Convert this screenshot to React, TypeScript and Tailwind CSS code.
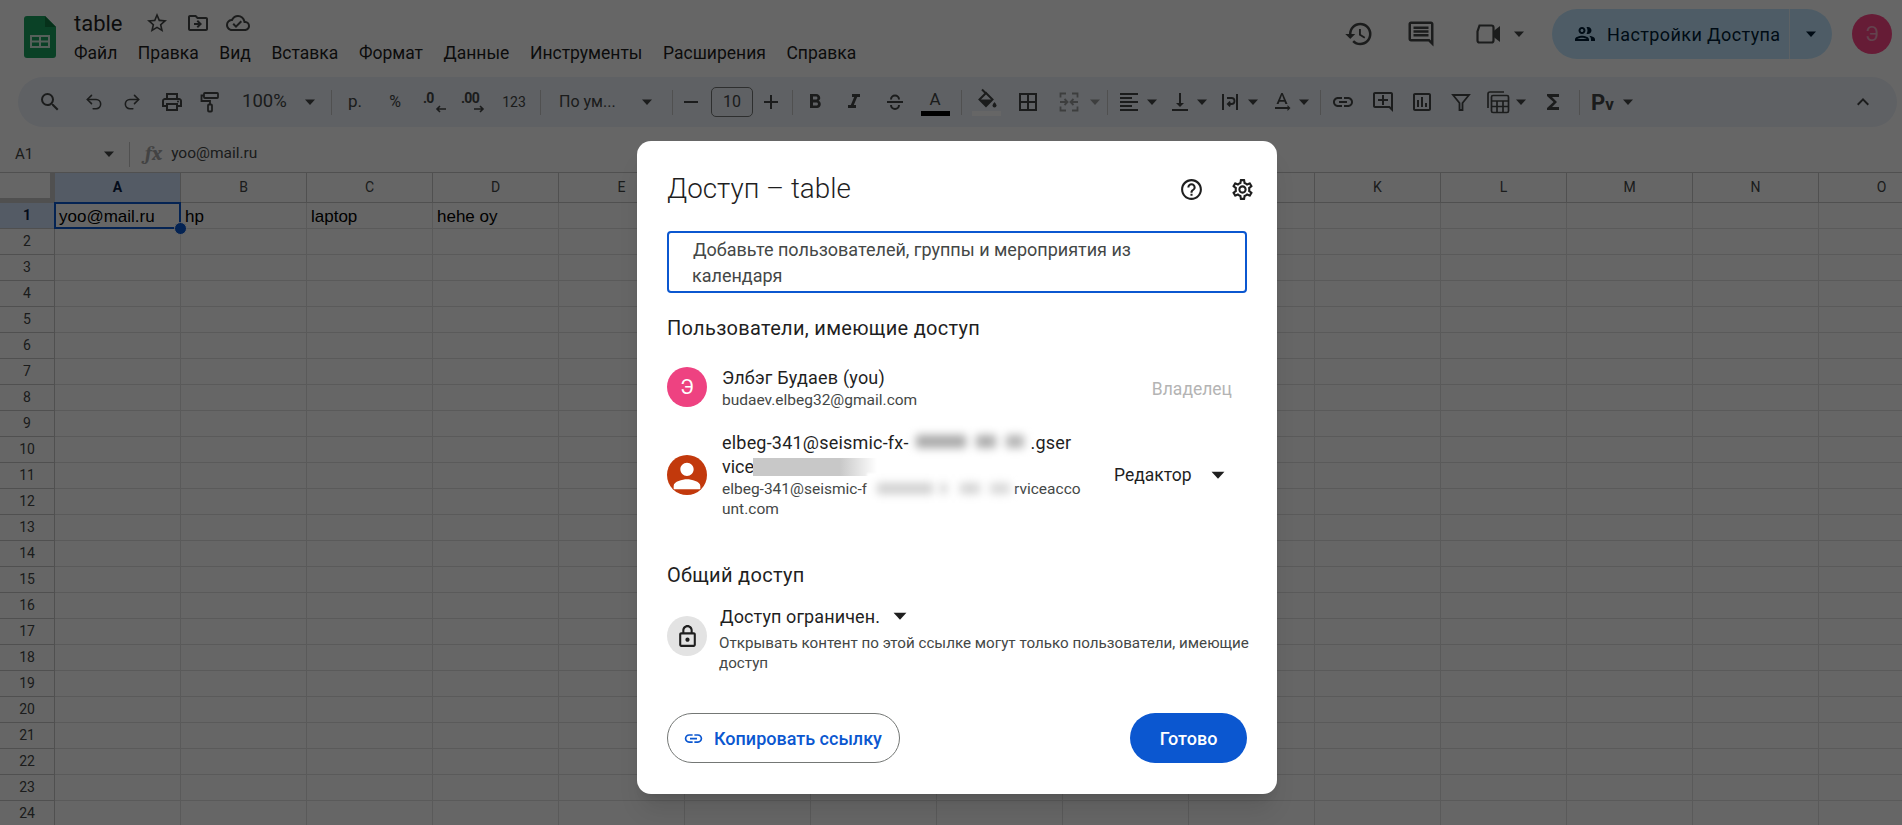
import React from "react";
import { Redo2, Undo2 } from "lucide-react";
import {
  MdExpandLess,
  MdFormatBold,
  MdFormatItalic,
  MdFunctions,
  MdHelpOutline,
  MdHistory,
  MdLink,
  MdOutlineAddComment,
  MdOutlineBorderAll,
  MdOutlineCloudDone,
  MdOutlineComment,
  MdOutlineDriveFileMove,
  MdOutlineInsertChart,
  MdOutlineLock,
  MdOutlinePeople,
  MdOutlinePrint,
  MdOutlineSettings,
  MdPerson,
  MdSearch,
  MdStarBorder,
  MdTextRotationNone,
  MdVerticalAlignBottom,
} from "react-icons/md";

const columns = ["A", "B", "C", "D", "E", "F", "G", "H", "I", "J", "K", "L", "M", "N", "O"];
const rows = Array.from({ length: 24 }, (_, i) => i + 1);
const menu = ["Файл", "Правка", "Вид", "Вставка", "Формат", "Данные", "Инструменты", "Расширения", "Справка"];
const firstRow = ["yoo@mail.ru", "hp", "laptop", "hehe oy"];

type CaretProps = { size?: string; tone?: string; className?: string };

const Caret = ({ size = "h-[14px] w-[14px]", tone = "fill-[#444746]", className = "" }: CaretProps) => (
  <svg viewBox="0 0 14 14" className={`shrink-0 ${size} ${tone} ${className}`}>
    <path d="M2 4.5h10l-5 5.5z" />
  </svg>
);

const Divider = ({ className = "" }: { className?: string }) => (
  <div className={`h-[25px] w-px shrink-0 bg-[#c7c7c7] ${className}`} />
);

// Tool icon with a fixed 24px box, the margin sets its place in the strip
const Tool = ({ className = "", children }: { className?: string; children: React.ReactNode }) => (
  <div className={`flex h-6 w-6 shrink-0 items-center justify-center text-[24px] text-[#444746] ${className}`}>
    {children}
  </div>
);

const Stroke = ({ children, color = "#444746" }: { children: React.ReactNode; color?: string }) => (
  <svg viewBox="0 0 24 24" className="h-6 w-6" fill="none" stroke={color} strokeWidth="1.8">
    {children}
  </svg>
);

const SheetsLogo = () => (
  <svg viewBox="0 0 32 42" className="h-[42px] w-8 shrink-0">
    <path d="M3 0h18l11 11v28a3 3 0 0 1-3 3H3a3 3 0 0 1-3-3V3a3 3 0 0 1 3-3z" fill="#1aa260" />
    <path d="M21 0l11 11H21z" fill="#0f7a42" />
    <path
      d="M6 19h20v13H6z M8 21v3.5h7V21z M17 21v3.5h7V21z M8 26.5V30h7v-3.5z M17 26.5V30h7v-3.5z"
      fill="#d8f0e2"
      fillRule="evenodd"
    />
  </svg>
);

const CameraIcon = () => (
  <svg viewBox="0 0 30 30" className="h-[30px] w-[30px]">
    <path
      d="M6.5 6.5h12a2 2 0 0 1 2 2v13a2 2 0 0 1-2 2h-12a2 2 0 0 1-2-2v-9z"
      fill="none"
      stroke="#444746"
      strokeWidth="2.2"
    />
    <path d="M20 12.5l7-5.5v16l-7-5.5z" fill="#444746" />
  </svg>
);

const PaintIcon = () => (
  <Stroke>
    <rect x="6" y="3" width="14" height="5" rx="0.8" />
    <path d="M6 5.5H3.5V11H12v3.5" />
    <rect x="10" y="14.5" width="4" height="7" rx="1" />
  </Stroke>
);

const StrikeIcon = () => (
  <Stroke>
    <path d="M8 9.5a4 4 0 0 1 8 0 M4 12h16 M8 15a4 4 0 0 0 8 0" strokeWidth="2" />
  </Stroke>
);

const FillIcon = () => (
  <svg viewBox="0 0 24 24" className="h-6 w-6">
    <path d="M12 6l6.5 6.5-6.5 6.5-6.5-6.5z" fill="none" stroke="#444746" strokeWidth="2" />
    <path d="M5.5 12.5h13L12 19z" fill="#444746" />
    <path d="M8 2.5l4 4" stroke="#444746" strokeWidth="2" />
    <path d="M20.5 15s-2 2.3-2 3.6a2 2 0 0 0 4 0c0-1.3-2-3.6-2-3.6z" fill="#444746" />
  </svg>
);

const MergeIcon = () => (
  <Stroke color="#9a9c9c">
    <path d="M9 3.5H3.5v4 M3.5 16.5v4H9 M15 3.5h5.5v4 M20.5 16.5v4H15" />
    <path d="M3 12h7 M7.5 9l3 3-3 3 M21 12h-7 M16.5 9l-3 3 3 3" />
  </Stroke>
);

const AlignIcon = () => (
  <Stroke>
    <path d="M3 4h18 M3 8h12 M3 12h18 M3 16h12 M3 20h18" />
  </Stroke>
);

const WrapIcon = () => (
  <Stroke>
    <path d="M5 4v16 M19 4v16" strokeWidth="2" />
    <path d="M9 8h4.5a2.8 2.8 0 0 1 0 6H10 M12.2 11.6L9.8 14l2.4 2.4" />
  </Stroke>
);

const FilterIcon = () => (
  <Stroke>
    <path d="M4 5h16l-6.5 8v7h-3v-7z" />
  </Stroke>
);

const CalcIcon = () => (
  <svg viewBox="0 0 24 24" className="h-6 w-6" fill="none" stroke="#444746" strokeWidth="1.7">
    <path d="M2 18V4a2 2 0 0 1 2-2h14" />
    <rect x="5.5" y="5.5" width="17" height="17" rx="1.5" />
    <path d="M5.5 11h17 M5.5 16.5h17 M11 11v11.5 M17 11v11.5" />
  </svg>
);

const DecimalIcon = ({ label, flip }: { label: string; flip?: boolean }) => (
  <div className="flex w-[24px] flex-col text-[14px] leading-[13px] font-bold text-[#444746]">
    <span className="self-start tracking-tighter">{label}</span>
    <svg
      viewBox="0 0 12 8"
      className={`h-2 w-3 self-end ${flip ? "rotate-180" : ""}`}
      fill="none"
      stroke="#444746"
      strokeWidth="1.6"
    >
      <path d="M11 4H2 M5 1L2 4l3 3" />
    </svg>
  </div>
);

const TopBar = () => (
  <div className="flex h-[77px] items-start">
    <div className="mt-4 ml-6">
      <SheetsLogo />
    </div>
    <div className="mt-2 ml-[18px] flex flex-col">
      <div className="flex h-[30px] items-center">
        <span className="text-[22px] text-[#1f1f1f]">table</span>
        <MdStarBorder className="ml-[22px] text-[24px] text-[#444746]" />
        <MdOutlineDriveFileMove className="ml-[17px] text-[24px] text-[#444746]" />
        <MdOutlineCloudDone className="ml-[16px] text-[24px] text-[#444746]" />
      </div>
      <div className="flex h-[30px] items-center gap-[20.6px] text-[17.5px] text-[#1f1f1f]">
        {menu.map((item) => (
          <span key={item}>{item}</span>
        ))}
      </div>
    </div>
    <div className="mt-[9px] mr-[10px] ml-auto flex items-center">
      <MdHistory className="text-[30px] text-[#444746]" />
      <MdOutlineComment className="ml-[32px] text-[30px] text-[#444746]" />
      <div className="ml-[37px]">
        <CameraIcon />
      </div>
      <Caret className="ml-[9px]" />
      <div className="ml-[26px] flex h-[50px] w-[280px] items-center rounded-full bg-[#c2e7ff]">
        <div className="flex h-full w-[238px] items-center border-r border-[#e8f4fc] pl-[21px]">
          <MdOutlinePeople className="shrink-0 text-[24px] text-[#001d35]" />
          <span className="ml-[10px] text-[18px] tracking-[0.4px] whitespace-nowrap text-[#001d35]">
            Настройки Доступа
          </span>
        </div>
        <Caret tone="fill-[#001d35]" className="ml-[14px]" />
      </div>
      <div className="ml-[20px] flex h-10 w-10 items-center justify-center rounded-full bg-[#ff4688] text-[20px] text-[#f7a8c4]">
        Э
      </div>
    </div>
  </div>
);

const Toolbar = () => (
  <div className="mr-[5px] ml-[18px] flex h-[50px] items-center rounded-full bg-[#edf2fa] text-[#444746]">
    <Tool className="ml-[20px]"><MdSearch /></Tool>
    <Tool className="ml-[20px]"><Undo2 size={20} strokeWidth={1.9} /></Tool>
    <Tool className="ml-[14px]"><Redo2 size={20} strokeWidth={1.9} /></Tool>
    <Tool className="ml-[16px]"><MdOutlinePrint /></Tool>
    <Tool className="ml-[14px]"><PaintIcon /></Tool>
    <span className="ml-[20px] w-[46px] shrink-0 text-[18.5px]">100%</span>
    <Caret className="ml-[15px]" />
    <Divider className="ml-[14px]" />
    <span className="ml-[15px] w-4 shrink-0 text-center text-[17px]">р.</span>
    <span className="ml-[24px] w-4 shrink-0 text-center text-[16px]">%</span>
    <Tool className="ml-[20px]"><DecimalIcon label=".0" /></Tool>
    <Tool className="ml-[14px]"><DecimalIcon label=".00" flip /></Tool>
    <span className="ml-[14px] w-[30px] shrink-0 text-center text-[14px]">123</span>
    <Divider className="ml-[11px]" />
    <span className="ml-[18px] w-[62px] shrink-0 text-[16px] whitespace-nowrap">По ум...</span>
    <Caret className="ml-[19px]" />
    <Divider className="ml-[18px]" />
    <Tool className="ml-[6px] text-[20px]">
      <svg viewBox="0 0 24 24" className="h-6 w-6 fill-[#444746]"><path d="M5 11h14v2H5z" /></svg>
    </Tool>
    <div className="ml-[8px] flex h-[30px] w-[42px] shrink-0 items-center justify-center rounded-[5px] border border-[#747775] text-[16px]">
      10
    </div>
    <Tool className="ml-[6px]">
      <svg viewBox="0 0 24 24" className="h-6 w-6 fill-[#444746]"><path d="M11 5h2v6h6v2h-6v6h-2v-6H5v-2h6z" /></svg>
    </Tool>
    <Divider className="ml-[9px]" />
    <Tool className="ml-[10px]"><MdFormatBold /></Tool>
    <Tool className="ml-[15px]"><MdFormatItalic /></Tool>
    <Tool className="ml-[17px]"><StrikeIcon /></Tool>
    <div className="ml-[16px] flex h-[30px] w-6 shrink-0 flex-col items-center">
      <span className="text-[17px] leading-[24px]">A</span>
      <div className="h-[5px] w-[29px] shrink-0 bg-black" />
    </div>
    <Divider className="ml-[14px]" />
    <div className="ml-[12px] flex h-[30px] w-6 shrink-0 flex-col items-center">
      <FillIcon />
      <div className="h-[5px] w-[29px] shrink-0 bg-white" />
    </div>
    <Tool className="ml-[18px]"><MdOutlineBorderAll /></Tool>
    <Tool className="ml-[17px]"><MergeIcon /></Tool>
    <Caret tone="fill-[#9a9c9c]" className="ml-[7px]" />
    <Divider className="ml-[5px]" />
    <Tool className="ml-[9px]"><AlignIcon /></Tool>
    <Caret className="ml-[4px]" />
    <Tool className="ml-[9px]"><MdVerticalAlignBottom /></Tool>
    <Caret className="ml-[3px]" />
    <Tool className="ml-[9px]"><WrapIcon /></Tool>
    <Caret className="ml-[4px]" />
    <Tool className="ml-[10px]"><MdTextRotationNone /></Tool>
    <Caret className="ml-[3px]" />
    <Divider className="ml-[9px]" />
    <Tool className="ml-[10px]"><MdLink /></Tool>
    <Tool className="ml-[16px]"><MdOutlineAddComment /></Tool>
    <Tool className="ml-[15px]"><MdOutlineInsertChart /></Tool>
    <Tool className="ml-[15px]"><FilterIcon /></Tool>
    <Tool className="ml-[13px]"><CalcIcon /></Tool>
    <Caret className="ml-[4px]" />
    <Tool className="ml-[13px]"><MdFunctions /></Tool>
    <Divider className="ml-[14px]" />
    <span className="ml-[11px] w-7 shrink-0 text-[22px] font-bold">
      P<span className="text-[17px]">v</span>
    </span>
    <Caret className="ml-[2px]" />
    <MdExpandLess className="mr-[22px] ml-auto text-[24px]" />
  </div>
);

const FormulaBar = () => (
  <div className="flex h-[45px] items-center pt-[9px] text-[#444746]">
    <span className="ml-[15px] w-[87px] text-[15px]">A1</span>
    <Caret />
    <div className="ml-[13px] h-[25px] w-px bg-[#c7c7c7]" />
    <span className="ml-[15px] font-serif text-[21px] font-bold text-[#a8a8a8] italic">fx</span>
    <span className="ml-[9px] text-[15.5px]">yoo@mail.ru</span>
  </div>
);

const Grid = () => (
  <div className="flex-1 overflow-hidden border-t border-[#c7c7c7] bg-white">
    <div className="flex h-[30px]">
      <div className="h-full w-[55px] shrink-0 border-r-[5px] border-b-[5px] border-[#c7c7c7]" />
      {columns.map((col) => (
        <div
          key={col}
          className={`flex h-full w-[126px] shrink-0 items-center justify-center border-r border-b border-[#c7c7c7] text-[14px] ${
            col === "A" ? "bg-[#d3e3fd] font-bold text-[#0b1f44]" : "text-[#444746]"
          }`}
        >
          {col}
        </div>
      ))}
    </div>
    {rows.map((row) => (
      <div key={row} className="flex h-[26px]">
        <div
          className={`flex w-[55px] shrink-0 items-center justify-center border-r border-b border-[#c7c7c7] text-[14px] ${
            row === 1 ? "bg-[#d3e3fd] font-bold text-[#0b1f44]" : "text-[#444746]"
          }`}
        >
          {row}
        </div>
        {columns.map((col, i) => (
          <div
            key={col}
            className="relative flex w-[126px] shrink-0 items-center border-r border-b border-[#e1e1e1] pt-[2px] pl-[4px] text-[17px] text-black [font-family:'Liberation_Sans',sans-serif]"
          >
            {row === 1 && firstRow[i]}
            {row === 1 && i === 0 && (
              <>
                <div className="absolute -top-px -right-px -bottom-px -left-px z-10 border-2 border-[#0b57d0]" />
                <div className="absolute -right-[7px] -bottom-[7px] z-10 h-[13px] w-[13px] rounded-full border border-white bg-[#0b57d0]" />
              </>
            )}
          </div>
        ))}
      </div>
    ))}
  </div>
);

// Censoring patches over the service account address: white box, soft grey smudges
const NamePatch = () => (
  <span className="absolute -top-[9px] left-[189px] flex h-[38px] w-[118px] items-center bg-white blur-[1px]">
    <span className="ml-[5px] h-[13px] w-[50px] bg-[#a8a8a8] blur-[4px]" />
    <span className="ml-[10px] h-[13px] w-[20px] bg-[#acacac] blur-[4px]" />
    <span className="ml-[10px] h-[13px] w-[18px] bg-[#b4b4b4] blur-[4px]" />
  </span>
);

const EmailPatch = () => (
  <span className="absolute -top-[6px] left-[145px] flex h-[31px] w-[147px] items-center bg-white blur-[1px]">
    <span className="ml-[10px] h-[11px] w-[56px] bg-[#cfcfcf] blur-[4px]" />
    <span className="ml-[7px] h-[11px] w-[7px] bg-[#d4d4d4] blur-[4px]" />
    <span className="ml-[13px] h-[11px] w-[20px] bg-[#d4d4d4] blur-[4px]" />
    <span className="ml-[10px] h-[11px] w-[20px] bg-[#d8d8d8] blur-[4px]" />
  </span>
);

const ShareDialog = () => (
  <div className="flex h-[653px] w-[640px] flex-col rounded-[14px] bg-white px-[30px] pt-[30px] text-[#1f1f1f] shadow-xl">
    <div className="flex h-9 items-center">
      <h1 className="text-[27.8px] font-light">Доступ – table</h1>
      <MdHelpOutline className="mr-[26px] ml-auto text-[25px]" />
      <MdOutlineSettings className="-mr-[8px] text-[25px]" />
    </div>

    <div className="mt-6 h-[62px] rounded-[4px] border-2 border-[#0b57d0] pt-1 pl-[24px] text-[18px] leading-[26px] text-[#444746]">
      <div>Добавьте пользователей, группы и мероприятия из</div>
      <div className="-ml-px">календаря</div>
    </div>

    <h2 className="mt-[23px] text-[20px] leading-6 tracking-[0.3px]">Пользователи, имеющие доступ</h2>

    <div className="mt-[27px] flex items-start">
      <div className="flex h-10 w-10 shrink-0 items-center justify-center rounded-full bg-[#ee4281] text-[20px] text-white">
        Э
      </div>
      <div className="ml-[15px]">
        <div className="text-[18px] leading-[22px] tracking-[0.2px]">Элбэг Будаев (you)</div>
        <div className="text-[15.5px] leading-[22px] text-[#444746]">budaev.elbeg32@gmail.com</div>
      </div>
      <span className="mt-[11px] mr-[15px] ml-auto text-[17.5px] leading-[22px] text-[#b4b4b4]">Владелец</span>
    </div>

    <div className="mt-[20px] flex items-center">
      <div className="flex h-10 w-10 shrink-0 items-end justify-center overflow-hidden rounded-full bg-[#c2390c]">
        <MdPerson className="-mb-[3px] text-[44px] text-white" />
      </div>
      <div className="ml-[15px] w-[370px]">
        <div className="relative text-[18px] leading-6 tracking-[0.2px] whitespace-nowrap">
          elbeg-341@seismic-fx-
          <span className="inline-block w-[122px]" />
          .gser
          <NamePatch />
        </div>
        <div className="relative text-[18px] leading-6">
          vice
          <span className="absolute top-[3px] left-[31px] h-[18px] w-[124px] bg-gradient-to-r from-[#c8c8c8] from-70% to-white" />
        </div>
        <div className="relative text-[15.5px] leading-5 whitespace-nowrap text-[#444746]">
          elbeg-341@seismic-f
          <span className="inline-block w-[147px]" />
          rviceacco
          <EmailPatch />
        </div>
        <div className="text-[15.5px] leading-5 text-[#444746]">unt.com</div>
      </div>
      <div className="ml-[22px] flex items-center">
        <span className="text-[17.5px]">Редактор</span>
        <Caret size="h-[18px] w-[18px]" tone="fill-[#1f1f1f]" className="ml-[17px]" />
      </div>
    </div>

    <h2 className="mt-[44px] text-[20px] leading-6 tracking-[0.3px]">Общий доступ</h2>

    <div className="mt-[17px] flex items-start">
      <div className="mt-3 flex h-10 w-10 shrink-0 items-center justify-center rounded-full bg-[#e3e3e3]">
        <MdOutlineLock className="text-[25px]" />
      </div>
      <div className="ml-[13px]">
        <div className="flex h-6 items-center">
          <span className="text-[18px] tracking-[0.1px]">Доступ ограничен.</span>
          <Caret size="h-[18px] w-[18px]" tone="fill-[#1f1f1f]" className="ml-[11px]" />
        </div>
        <div className="mt-[5px] -ml-px text-[15.2px] leading-[20px] whitespace-nowrap text-[#444746]">
          Открывать контент по этой ссылке могут только пользователи, имеющие
          <br />
          доступ
        </div>
      </div>
    </div>

    <div className="mt-[40px] flex items-center justify-between">
      <button className="flex h-[50px] w-[233px] items-center rounded-full border border-[#747775] pl-[15px] text-[18px] font-medium text-[#0b57d0]">
        <MdLink className="text-[21px]" />
        <span className="ml-[10px]">Копировать ссылку</span>
      </button>
      <button className="h-[50px] w-[117px] rounded-full bg-[#0b57d0] text-[18px] font-medium text-white">Готово</button>
    </div>
  </div>
);

export default function App() {
  return (
    <div className="relative flex h-[825px] w-full flex-col overflow-hidden bg-white [font-family:Roboto,sans-serif]">
      <TopBar />
      <Toolbar />
      <FormulaBar />
      <Grid />
      {/* Modal scrim and dialog */}
      <div className="absolute inset-0 z-20 flex items-start justify-center bg-black/60 pt-[141px] pl-[12px]">
        <ShareDialog />
      </div>
    </div>
  );
}
